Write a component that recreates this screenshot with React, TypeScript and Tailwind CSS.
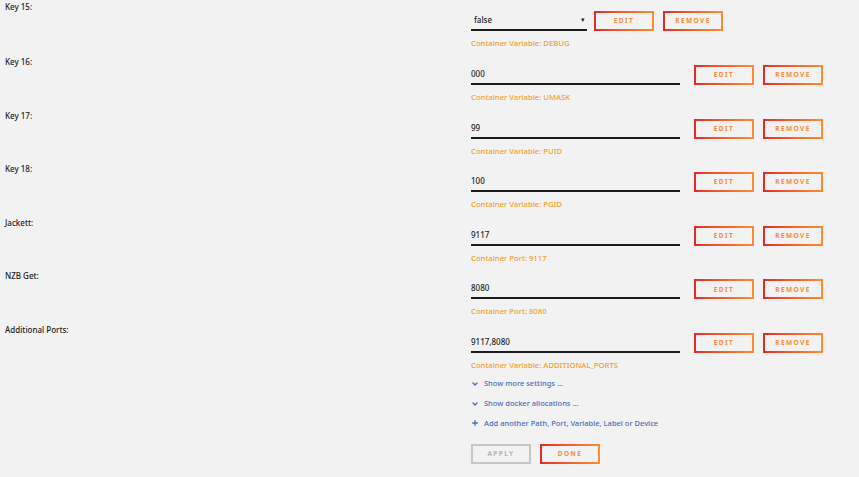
import { ChevronDown, Plus } from 'lucide-react'

type Row = {
  label: string
  value: string
  note: string
  select?: boolean
}

const rows: Row[] = [
  { label: 'Key 15:', value: 'false', note: 'Container Variable: DEBUG', select: true },
  { label: 'Key 16:', value: '000', note: 'Container Variable: UMASK' },
  { label: 'Key 17:', value: '99', note: 'Container Variable: PUID' },
  { label: 'Key 18:', value: '100', note: 'Container Variable: PGID' },
  { label: 'Jackett:', value: '9117', note: 'Container Port: 9117' },
  { label: 'NZB Get:', value: '8080', note: 'Container Port: 8080' },
  { label: 'Additional Ports:', value: '9117,8080', note: 'Container Variable: ADDITIONAL_PORTS' },
]

function GradButton({ children, className = '' }: { children: React.ReactNode; className?: string }) {
  return (
    <div className={`bg-gradient-to-r from-[#e22828] to-[#ff8c2f] p-[2px] w-[60px] h-[20px] shrink-0 ${className}`}>
      <div className="w-full h-full bg-[#f2f2f2] flex items-center justify-center text-[6.5px] font-bold tracking-[0.22em] text-[#fa8a38]">
        {children}
      </div>
    </div>
  )
}

function SettingRow({ row, first, last }: { row: Row; first: boolean; last: boolean }) {
  const h = first ? 'h-[55px]' : last ? '' : 'h-[53.6px]'
  return (
    <div className={`flex items-start ${h}`}>
      <div className="w-[471px] shrink-0 pl-[5px] leading-[14px] text-[8px] font-medium text-[#1c1c1c]">
        {row.label}
      </div>
      <div className={first ? 'mt-[11px]' : 'mt-[10px]'}>
        <div className="flex items-center h-[20px]">
          {row.select ? (
            <>
              <div className="w-[116px] h-[20px] border-b-2 border-[#1c1c1c] flex items-center justify-between pl-[3px] pr-[2px] text-[8px] font-medium text-[#1c1c1c]">
                <span>{row.value}</span>
                <span className="text-[7px]">▾</span>
              </div>
              <GradButton className="ml-[7px]">EDIT</GradButton>
              <GradButton className="ml-[9px]">REMOVE</GradButton>
            </>
          ) : (
            <>
              <div className="w-[209px] h-[20px] border-b-2 border-[#1c1c1c] flex items-center text-[8px] font-medium text-[#1c1c1c]">
                {row.value}
              </div>
              <GradButton className="ml-[14px]">EDIT</GradButton>
              <GradButton className="ml-[9px]">REMOVE</GradButton>
            </>
          )}
        </div>
        <div className="mt-[6px] leading-[12px] text-[7.7px] font-medium text-[#f0a02c]">{row.note}</div>
      </div>
    </div>
  )
}

export default function App() {
  return (
    <div
      className="w-[859px] h-[477px] bg-[#f2f2f2] overflow-hidden"
      style={{ fontFamily: '"Noto Sans", "Open Sans", sans-serif' }}
    >
      {rows.map((row, i) => (
        <SettingRow key={row.label} row={row} first={i === 0} last={i === rows.length - 1} />
      ))}

      {/* links + actions */}
      <div className="pl-[471px] mt-[3px] text-[7.5px] font-medium text-[#486dba]">
        <div className="flex items-center gap-[5px] h-[20px]">
          <ChevronDown size={8} strokeWidth={4} />
          <span>Show more settings ...</span>
        </div>
        <div className="flex items-center gap-[5px] h-[20px]">
          <ChevronDown size={8} strokeWidth={4} />
          <span>Show docker allocations ...</span>
        </div>
        <div className="flex items-center gap-[5px] h-[19px]">
          <Plus size={8} strokeWidth={4} />
          <span>Add another Path, Port, Variable, Label or Device</span>
        </div>
        <div className="flex items-center gap-[9px] mt-[11px]">
          <div className="w-[60px] h-[20px] border-2 border-[#c6c6c6] flex items-center justify-center text-[6.5px] font-bold tracking-[0.22em] text-[#b4b4b4]">
            APPLY
          </div>
          <GradButton>DONE</GradButton>
        </div>
      </div>
    </div>
  )
}
